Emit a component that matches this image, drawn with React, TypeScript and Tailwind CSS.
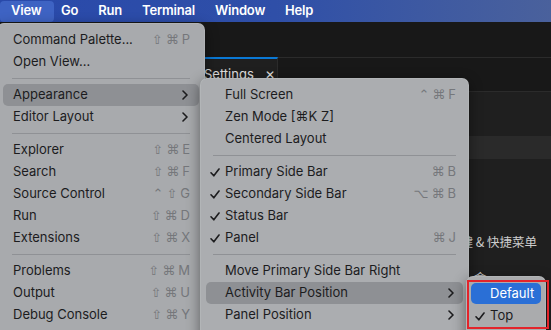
import React from "react";

type Item =
  | { sep: true }
  | {
      sep?: false;
      label: string;
      keys?: string[];
      sub?: boolean;
      checked?: boolean;
      active?: boolean;
    };

const viewItems: Item[] = [
  { label: "Command Palette...", keys: ["⇧", "⌘", "P"] },
  { label: "Open View..." },
  { sep: true },
  { label: "Appearance", sub: true, active: true },
  { label: "Editor Layout", sub: true },
  { sep: true },
  { label: "Explorer", keys: ["⇧", "⌘", "E"] },
  { label: "Search", keys: ["⇧", "⌘", "F"] },
  { label: "Source Control", keys: ["⌃", "⇧", "G"] },
  { label: "Run", keys: ["⇧", "⌘", "D"] },
  { label: "Extensions", keys: ["⇧", "⌘", "X"] },
  { sep: true },
  { label: "Problems", keys: ["⇧", "⌘", "M"] },
  { label: "Output", keys: ["⇧", "⌘", "U"] },
  { label: "Debug Console", keys: ["⇧", "⌘", "Y"] },
];

const appearanceItems: Item[] = [
  { label: "Full Screen", keys: ["⌃", "⌘", "F"] },
  { label: "Zen Mode [⌘K Z]" },
  { label: "Centered Layout" },
  { sep: true },
  { label: "Primary Side Bar", checked: true, keys: ["⌘", "B"] },
  { label: "Secondary Side Bar", checked: true, keys: ["⌥", "⌘", "B"] },
  { label: "Status Bar", checked: true },
  { label: "Panel", checked: true, keys: ["⌘", "J"] },
  { sep: true },
  { label: "Move Primary Side Bar Right" },
  { label: "Activity Bar Position", sub: true, active: true },
  { label: "Panel Position", sub: true },
];

function Check() {
  return (
    <svg width="10" height="9" viewBox="0 0 10 9" fill="none">
      <path
        d="M1 4.8 L3.8 7.8 L9 1"
        stroke="#1c1c1e"
        strokeWidth="1.6"
        strokeLinecap="round"
        strokeLinejoin="round"
      />
    </svg>
  );
}

function Chevron() {
  return (
    <svg width="6" height="10" viewBox="0 0 6 10" fill="none">
      <path
        d="M1 1 L5 5 L1 9"
        stroke="#1c1c1e"
        strokeWidth="1.6"
        strokeLinecap="round"
        strokeLinejoin="round"
      />
    </svg>
  );
}

function Keys({ keys }: { keys: string[] }) {
  return (
    <div className="flex items-center gap-[3px] text-[#75777b]">
      {keys.map((k, i) => (
        <span
          key={i}
          className={
            i === keys.length - 1
              ? "text-[13px] font-[Inter,sans-serif]"
              : "text-[13px] font-['DejaVu_Sans',sans-serif]"
          }
        >
          {k}
        </span>
      ))}
    </div>
  );
}

function Menu({
  items,
  withChecks,
  padLeft,
  keyPad,
  sepClass,
}: {
  items: Item[];
  withChecks: boolean;
  padLeft: string;
  keyPad: string;
  sepClass: string;
}) {
  return (
    <>
      {items.map((it, i) => {
        if (it.sep) {
          return (
            <div key={i} className="h-[11px] flex items-center">
              <div className={`h-px flex-1 bg-[#8f9195] ${sepClass}`} />
            </div>
          );
        }
        return (
          <div
            key={i}
            className={`mx-[5px] h-[22px] flex items-center rounded-[5px] ${padLeft} ${keyPad} ${
              it.active ? "bg-[#8e9094]" : ""
            }`}
          >
            {withChecks && (
              <span className="w-[15px] flex items-center">{it.checked && <Check />}</span>
            )}
            <span className="flex-1 text-[13px] text-[#1c1c1e] whitespace-nowrap">{it.label}</span>
            {it.keys && <Keys keys={it.keys} />}
            {it.sub && (
              <span className="pr-[2px] flex items-center">
                <Chevron />
              </span>
            )}
          </div>
        );
      })}
    </>
  );
}

export default function App() {
  const menuBar = ["Go", "Run", "Terminal", "Window", "Help"];
  return (
    <div className="relative w-[551px] h-[330px] overflow-hidden bg-[#1f1f1f] font-[Inter,'Noto_Sans_CJK_SC',sans-serif]">
      {/* mac menu bar */}
      <div className="h-[22px] flex items-center bg-linear-to-r from-[#2949aa] via-[#2f4fa8] to-[#4a619c] text-white text-[13px] font-semibold tracking-[-0.2px]">
        <div className="h-[21px] w-[54px] pl-[11px] flex items-center rounded-[4px] bg-[#3e63c3]">View</div>
        <div className="flex items-center gap-[20px] ml-[7px]">
          {menuBar.map((m) => (
            <span key={m}>{m}</span>
          ))}
        </div>
      </div>

      {/* editor behind the menus */}
      <div className="h-[35px] bg-[#181818]" />
      <div className="h-[35px] flex border-t border-[#2b2b2b] border-b bg-[#181818]">
        <div className="w-[150px]" />
        <div className="w-[128px] -mt-px flex items-center pl-[54px] gap-[11px] bg-[#1f1f1f] border-t-2 border-[#0a78d4] border-r border-r-[#2b2b2b] text-[13px] text-[#e0e0e0]">
          <span>Settings</span>
          <span className="text-[12px]">✕</span>
        </div>
      </div>
      <div className="mt-[44px] h-[23px] bg-[#2a2a2a]" />
      <div className="mt-[74px] flex justify-end pr-[14px] text-[12.5px] text-[#cccccc] font-['Noto_Sans_CJK_SC',sans-serif]">
        键 &amp; 快捷菜单
      </div>
      <div className="mt-[17px] pl-[474px] text-[12.5px] text-[#cccccc] font-['Noto_Sans_CJK_SC',sans-serif]">
        命
      </div>

      {/* View menu */}
      <div className="absolute left-[-3px] top-[23px] w-[208px] h-[320px] pt-[5px] rounded-[7px] bg-[#a8aaad] shadow-[0_4px_14px_rgba(0,0,0,0.45)] border border-[#b6b8bb]/60">
        <Menu items={viewItems} withChecks={false} padLeft="pl-[10px]" keyPad="pr-[9px]" sepClass="mx-[14px]" />
      </div>

      {/* Appearance submenu */}
      <div className="absolute left-[200px] top-[78px] w-[269px] h-[270px] pt-[5px] rounded-[7px] bg-[#abadb0] shadow-[0_4px_14px_rgba(0,0,0,0.45)] border border-[#b8babd]/60">
        <Menu items={appearanceItems} withChecks padLeft="pl-[4px]" keyPad="pr-[7px]" sepClass="mx-[12px]" />
      </div>

      {/* Activity Bar Position submenu */}
      <div className="absolute left-[466px] top-[276px] w-[80px] h-[70px] pt-[6px] rounded-[7px] bg-[#aaabad] shadow-[0_4px_14px_rgba(0,0,0,0.45)] border border-[#b8babd]/60">
        <div className="mx-[4px] h-[21px] flex items-center pl-[19px] rounded-[5px] bg-[#2a6fd6] text-white text-[13px]">
          Default
        </div>
        <div className="mx-[4px] h-[22px] mt-px flex items-center pl-[4px] text-[13px] text-[#1c1c1e]">
          <span className="w-[15px] flex items-center">
            <Check />
          </span>
          Top
        </div>
      </div>

      {/* red annotation box */}
      <div className="absolute left-[467px] top-[280px] w-[82px] h-[49px] border-2 border-[#e3242b]" />
    </div>
  );
}
